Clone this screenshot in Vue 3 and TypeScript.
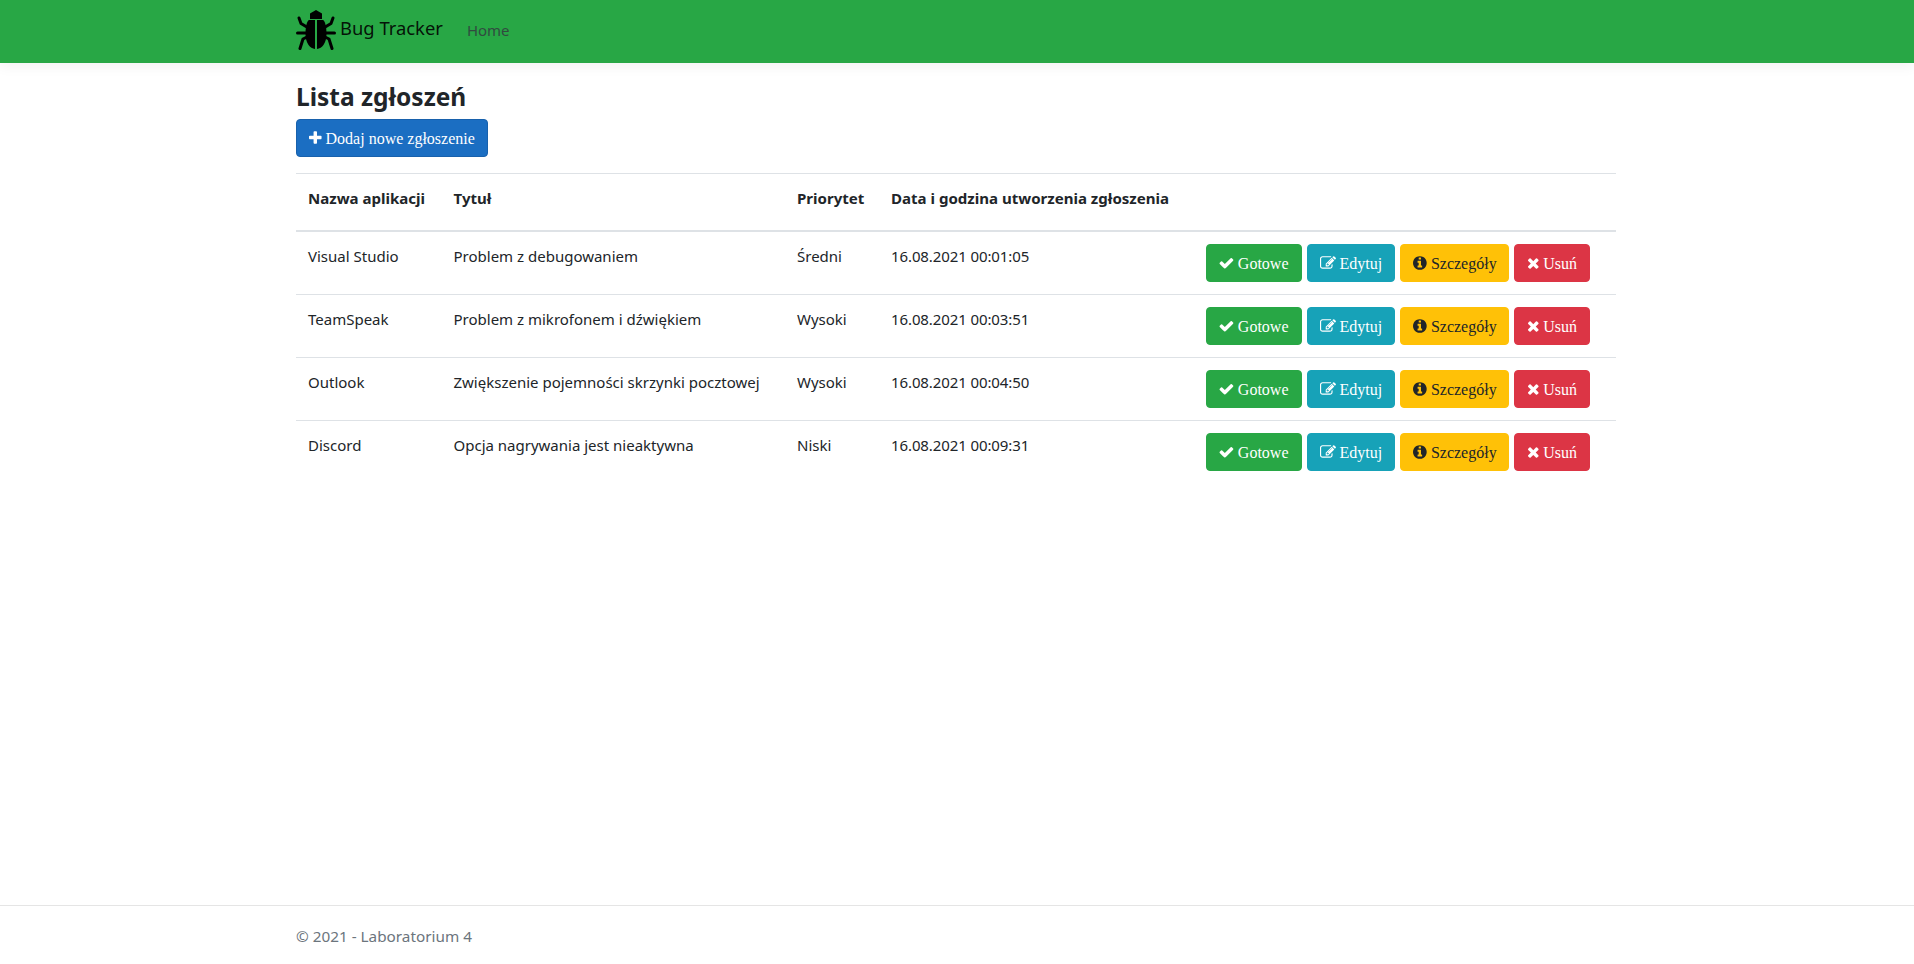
<script setup lang="ts">
interface Issue {
  app: string
  title: string
  priority: string
  created: string
}

const issues: Issue[] = [
  { app: 'Visual Studio', title: 'Problem z debugowaniem', priority: 'Średni', created: '16.08.2021 00:01:05' },
  { app: 'TeamSpeak', title: 'Problem z mikrofonem i dźwiękiem', priority: 'Wysoki', created: '16.08.2021 00:03:51' },
  { app: 'Outlook', title: 'Zwiększenie pojemności skrzynki pocztowej', priority: 'Wysoki', created: '16.08.2021 00:04:50' },
  { app: 'Discord', title: 'Opcja nagrywania jest nieaktywna', priority: 'Niski', created: '16.08.2021 00:09:31' },
]

const actions = [
  {
    label: 'Gotowe',
    cls: 'btn-success',
    box: '64 0 1664 1792',
    width: 14.86,
    d: 'M1671 566q0 40-28 68l-724 724-136 136q-28 28-68 28t-68-28l-136-136-362-362q-28-28-28-68t28-68l136-136q28-28 68-28t68 28l294 295 656-657q28-28 68-28t68 28l136 136q28 28 28 68z',
  },
  {
    label: 'Edytuj',
    cls: 'btn-info',
    box: '0 0 1792 1792',
    width: 16,
    d: 'M888 1184l116-116-152-152-116 116v56h96v96h56zm440-720q-16-16-33 1l-350 350q-17 17-1 33t33-1l350-350q17-17 1-33zm80 594v190q0 119-84.5 203.5t-203.5 84.5h-832q-119 0-203.5-84.5t-84.5-203.5v-832q0-119 84.5-203.5t203.5-84.5h832q63 0 117 25 15 7 18 23 3 17-9 29l-49 49q-14 14-32 8-23-6-45-6h-832q-66 0-113 47t-47 113v832q0 66 47 113t113 47h832q66 0 113-47t47-113v-126q0-13 9-22l64-64q15-15 35-7t20 29zm-96-738l288 288-672 672h-288v-288zm444 132l-92 92-288-288 92-92q28-28 68-28t68 28l152 152q28 28 28 68t-28 68z',
  },
  {
    label: 'Szczegóły',
    cls: 'btn-warning',
    box: '128 0 1536 1792',
    width: 13.71,
    d: 'M1152 1376v-160q0-14-9-23t-23-9h-96v-512q0-14-9-23t-23-9h-320q-14 0-23 9t-9 23v160q0 14 9 23t23 9h96v320h-96q-14 0-23 9t-9 23v160q0 14 9 23t23 9h448q14 0 23-9t9-23zm-128-896v-160q0-14-9-23t-23-9h-192q-14 0-23 9t-9 23v160q0 14 9 23t23 9h192q14 0 23-9t9-23zm640 416q0 209-103 385.5t-279.5 279.5-385.5 103-385.5-103-279.5-279.5-103-385.5 103-385.5 279.5-279.5 385.5-103 385.5 103 279.5 279.5 103 385.5z',
  },
  {
    label: 'Usuń',
    cls: 'btn-danger',
    box: '192 0 1408 1792',
    width: 12.57,
    d: 'M1490 1322q0 40-28 68l-136 136q-28 28-68 28t-68-28l-294-294-294 294q-28 28-68 28t-68-28l-136-136q-28-28-28-68t28-68l294-294-294-294q-28-28-28-68t28-68l136-136q28-28 68-28t68 28l294 294 294-294q28-28 68-28t68 28l136 136q28 28 28 68t-28 68l-294 294 294 294q28 28 28 68z',
  },
]

const plusIcon =
  'M1600 736v192q0 40-28 68t-68 28h-416v416q0 40-28 68t-68 28h-192q-40 0-68-28t-28-68v-416h-416q-40 0-68-28t-28-68v-192q0-40 28-68t68-28h416v-416q0-40 28-68t68-28h192q40 0 68 28t28 68v416h416q40 0 68 28t28 68z'
</script>

<template>
  <div class="page">
    <header class="navbar">
      <div class="container nav-inner">
        <a class="brand">
          <svg class="bug" viewBox="0 0 40 40" width="40" height="40" aria-hidden="true">
            <path d="M14 9 L14 3.500 L20 0 L26 3.500 L26 9 Z" fill="#000" />
            <path d="M19 10 L19 39 C14 38.500 9.500 33 9.500 24 C9.500 16 11 11 13 10 Z" fill="#000" />
            <path d="M21 10 L21 39 C26 38.500 30.500 33 30.500 24 C30.500 16 29 11 27 10 Z" fill="#000" />
            <g fill="none" stroke="#000" stroke-width="3" stroke-linecap="round" stroke-linejoin="round">
              <path d="M3 8 L5 13.500 L10 16.500" />
              <path d="M37 8 L35 13.500 L30 16.500" />
              <path d="M1.500 23 L10 23" />
              <path d="M38.500 23 L30 23" />
              <path d="M4 38.500 L7 29 L11 27" />
              <path d="M36 38.500 L33 29 L29 27" />
            </g>
          </svg>
          <span class="brand-name">Bug Tracker</span>
        </a>
        <a class="nav-link">Home</a>
      </div>
    </header>

    <main class="container content">
      <h1>Lista zgłoszeń</h1>
      <button class="btn btn-primary" type="button">
        <svg class="fa" viewBox="192 0 1408 1792" width="12.57" height="16" aria-hidden="true"><path :d="plusIcon" fill="currentColor" /></svg>
        Dodaj nowe zgłoszenie
      </button>

      <table class="issues">
        <colgroup>
          <col style="width: 145.5px" />
          <col style="width: 343.5px" />
          <col style="width: 94px" />
          <col style="width: 315px" />
          <col />
        </colgroup>
        <thead>
          <tr>
            <th>Nazwa aplikacji</th>
            <th>Tytuł</th>
            <th>Priorytet</th>
            <th>Data i godzina utworzenia zgłoszenia</th>
            <th></th>
          </tr>
        </thead>
        <tbody>
          <tr v-for="issue in issues" :key="issue.app">
            <td>{{ issue.app }}</td>
            <td>{{ issue.title }}</td>
            <td>{{ issue.priority }}</td>
            <td class="created">{{ issue.created }}</td>
            <td>
              <div class="actions">
                <button v-for="a in actions" :key="a.label" class="btn" :class="a.cls" type="button">
                  <svg class="fa" :viewBox="a.box" :width="a.width" height="16" aria-hidden="true"><path :d="a.d" fill="currentColor" /></svg>
                  {{ a.label }}
                </button>
              </div>
            </td>
          </tr>
        </tbody>
      </table>
    </main>

    <footer class="footer">
      <div class="container">© 2021 - Laboratorium 4</div>
    </footer>
  </div>
</template>

<style>
html,
body {
  margin: 0;
  background: #fff;
}
</style>

<style scoped>
.page {
  min-height: 100vh;
  display: flex;
  flex-direction: column;
  font-family: 'Noto Sans', 'Open Sans', sans-serif;
  font-size: 15px;
  line-height: 24px;
  color: #212529;
}
.container {
  width: 1320px;
  margin-left: 296px;
}
.navbar {
  height: 63px;
  background: #28a745;
  box-shadow: 0 4px 12px rgba(0, 0, 0, 0.05);
}
.nav-inner {
  display: flex;
  align-items: flex-start;
}
.brand {
  display: flex;
  align-items: flex-start;
  color: rgba(0, 0, 0, 0.9);
  margin-top: 10px;
}
.bug {
  display: block;
}
.brand-name {
  font-size: 18.4px;
  line-height: 30px;
  margin-left: 4px;
  margin-top: 3px;
}
.nav-link {
  margin-left: 24px;
  margin-top: 18px;
  color: #343a40;
  opacity: 0.85;
}
.content {
  padding-top: 19px;
}
h1 {
  margin: 0 0 7px;
  font-size: 24.5px;
  line-height: 30px;
  font-weight: 700;
}
.btn {
  height: 38px;
  padding: 2px 12px 0;
  border: 1px solid transparent;
  border-radius: 4px;
  font-family: 'Liberation Serif', serif;
  font-size: 16px;
  white-space: nowrap;
  color: #fff;
  display: inline-flex;
  align-items: center;
  gap: 4px;
}
.fa {
  flex: none;
  margin-top: -2px;
}
.btn-primary {
  background: #1b6ec2;
  border-color: #1861ac;
}
.btn-success {
  background: #28a745;
  border-color: #28a745;
}
.btn-info {
  background: #17a2b8;
  border-color: #17a2b8;
}
.btn-warning {
  background: #ffc107;
  border-color: #ffc107;
  color: #212529;
  padding-right: 11px;
}
.btn-danger {
  background: #dc3545;
  border-color: #dc3545;
}
.issues {
  width: 100%;
  margin-top: 16px;
  table-layout: fixed;
  border-collapse: separate;
  border-spacing: 0;
  border-top: 1px solid #dee2e6;
}
.issues th {
  padding: 12px 12px 20px;
  text-align: left;
  font-size: 15.05px;
  font-weight: 700;
  vertical-align: top;
  white-space: nowrap;
  border-bottom: 2px solid #dee2e6;
}
.issues td {
  padding: 12px;
  vertical-align: top;
  white-space: nowrap;
  border-bottom: 1px solid #dee2e6;
}
.issues td.created {
  letter-spacing: -0.1px;
}
.issues tbody tr:last-child td {
  border-bottom: none;
}
.actions {
  display: flex;
  gap: 5px;
}
.footer {
  margin-top: auto;
  height: 58px;
  font-size: 15.3px;
  line-height: 60px;
  border-top: 1px solid #e5e5e5;
  color: #6c757d;
}
</style>
